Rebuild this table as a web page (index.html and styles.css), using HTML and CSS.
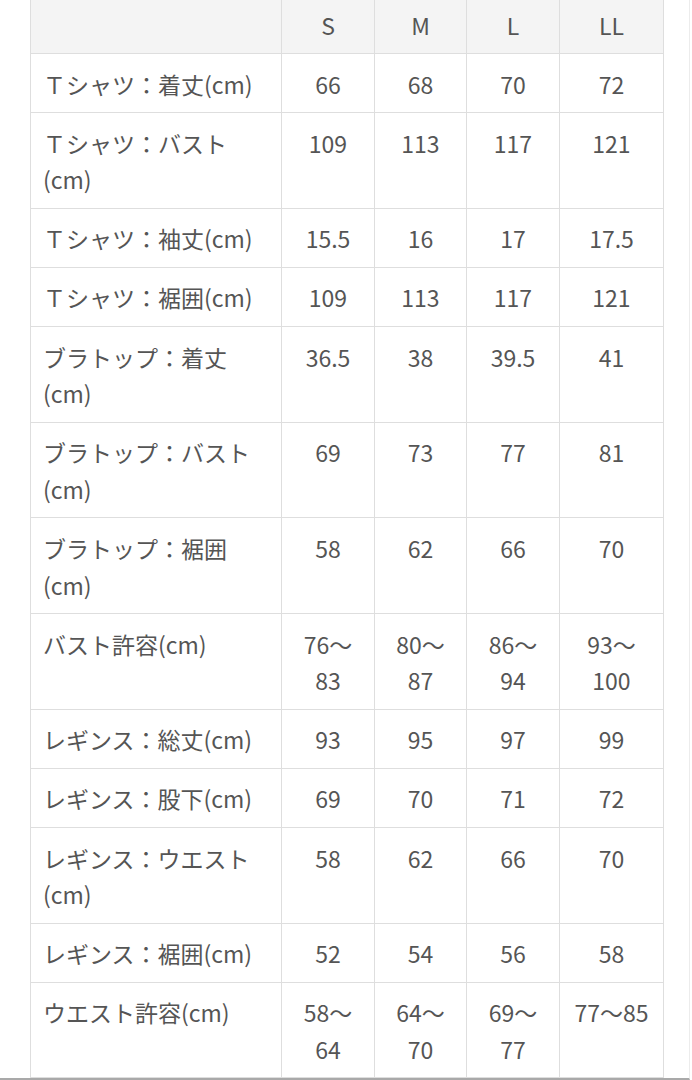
FILE: index.html
```html
<!DOCTYPE html>
<html lang="ja">
<head>
<meta charset="utf-8">
<title>サイズ表</title>
<link rel="stylesheet" href="styles.css">
</head>
<body>
<div class="page">
  <table class="size-table">
    <colgroup>
      <col class="c-label">
      <col class="c-size">
      <col class="c-size2">
      <col class="c-size">
      <col class="c-size3">
    </colgroup>
    <thead>
      <tr><th class="label"></th><th>S</th><th>M</th><th>L</th><th>LL</th></tr>
    </thead>
    <tbody>
      <tr><td class="label">Ｔシャツ：着丈(cm)</td><td>66</td><td>68</td><td>70</td><td>72</td></tr>
      <tr><td class="label">Ｔシャツ：バスト<br>(cm)</td><td>109</td><td>113</td><td>117</td><td>121</td></tr>
      <tr><td class="label">Ｔシャツ：袖丈(cm)</td><td>15.5</td><td>16</td><td>17</td><td>17.5</td></tr>
      <tr><td class="label">Ｔシャツ：裾囲(cm)</td><td>109</td><td>113</td><td>117</td><td>121</td></tr>
      <tr><td class="label">ブラトップ：着丈<br>(cm)</td><td>36.5</td><td>38</td><td>39.5</td><td>41</td></tr>
      <tr><td class="label">ブラトップ：バスト<br>(cm)</td><td>69</td><td>73</td><td>77</td><td>81</td></tr>
      <tr><td class="label">ブラトップ：裾囲<br>(cm)</td><td>58</td><td>62</td><td>66</td><td>70</td></tr>
      <tr><td class="label">バスト許容(cm)</td><td>76～<br>83</td><td>80～<br>87</td><td>86～<br>94</td><td>93～<br>100</td></tr>
      <tr><td class="label">レギンス：総丈(cm)</td><td>93</td><td>95</td><td>97</td><td>99</td></tr>
      <tr><td class="label">レギンス：股下(cm)</td><td>69</td><td>70</td><td>71</td><td>72</td></tr>
      <tr><td class="label">レギンス：ウエスト<br>(cm)</td><td>58</td><td>62</td><td>66</td><td>70</td></tr>
      <tr><td class="label">レギンス：裾囲(cm)</td><td>52</td><td>54</td><td>56</td><td>58</td></tr>
      <tr><td class="label">ウエスト許容(cm)</td><td>58～<br>64</td><td>64～<br>70</td><td>69～<br>77</td><td>77～85</td></tr>
    </tbody>
  </table>
</div>
</body>
</html>
```

FILE: styles.css
```css
html, body {
  margin: 0;
  padding: 0;
  background: #ffffff;
}

.page {
  box-sizing: border-box;
  width: 690px;
  height: 1080px;
  overflow: hidden;
  border-right: 1px solid #ececec;
  border-bottom: 2px solid #a9a9a9;
  padding-left: 30px;
}

.size-table {
  margin-top: -6px;
  border-collapse: collapse;
  table-layout: fixed;
  width: 633px;
  font-family: "Noto Sans CJK JP", "Noto Sans", sans-serif;
  font-size: 23px;
  line-height: 36.6px;
  color: #555555;
}

.c-label { width: 251px; }
.c-size { width: 93px; }
.c-size2 { width: 92px; }
.c-size3 { width: 104px; }

.size-table th,
.size-table td {
  border: 1px solid #dedede;
  padding: 11.5px 6px 10px;
  text-align: center;
  vertical-align: top;
  font-weight: 400;
  white-space: nowrap;
}

.size-table thead th {
  background: #f4f4f4;
}

.size-table .label {
  text-align: left;
  padding-left: 12px;
  padding-right: 6px;
}
```
